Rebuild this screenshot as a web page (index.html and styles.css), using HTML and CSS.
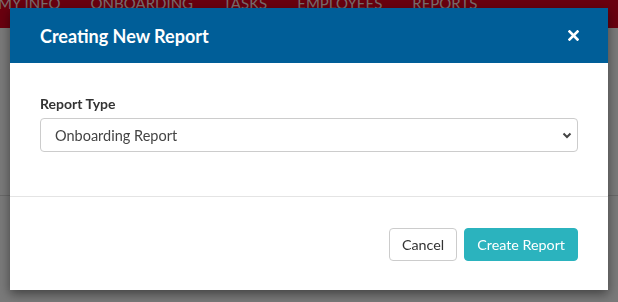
FILE: index.html
```html
<!DOCTYPE html>
<html lang="en">
<head>
    <meta charset="UTF-8">
    <title>Creating New Report</title>
    <link rel="stylesheet" href="styles.css">
</head>
<body>
    <nav class="top-nav">
        <a href="#">My Info</a>
        <a href="#">Onboarding</a>
        <a href="#">Tasks</a>
        <a href="#">Employees</a>
        <a href="#">Reports</a>
    </nav>
    <div class="page-rule"></div>

    <div class="backdrop"></div>

    <div class="modal">
        <div class="modal-header">
            <h2 class="modal-title">Creating New Report</h2>
            <button class="modal-close" aria-label="Close">
                <svg width="11" height="11" viewBox="0 0 11 11">
                    <path d="M1.5 1.5 L9.5 9.5 M9.5 1.5 L1.5 9.5" stroke="#fff" stroke-width="2.6" stroke-linecap="square"/>
                </svg>
            </button>
        </div>
        <div class="modal-body">
            <label class="field-label" for="reportType">Report Type</label>
            <div class="select-wrap">
                <select id="reportType" class="field-select">
                    <option>Onboarding Report</option>
                    <option>Employee Report</option>
                    <option>Task Report</option>
                </select>
                <svg class="select-caret" width="10" height="7" viewBox="0 0 10 7">
                    <path d="M1.5 1.5 L5 5 L8.5 1.5" fill="none" stroke="#444" stroke-width="2"/>
                </svg>
            </div>
        </div>
        <div class="modal-footer">
            <button class="btn btn-default">Cancel</button>
            <button class="btn btn-info">Create Report</button>
        </div>
    </div>
</body>
</html>
```

FILE: styles.css
```css
body {
    margin: 0;
    font-family: Lato, "Open Sans", sans-serif;
    background: #f2f2f2;
    height: 302px;
    overflow: hidden;
}

.top-nav {
    height: 28px;
    background: #d2001e;
    display: flex;
    gap: 30px;
    padding-left: 0;
    margin-left: -2px;
    overflow: hidden;
}

.top-nav a {
    flex-shrink: 0;
    color: #f0d8db;
    text-decoration: none;
    text-transform: uppercase;
    font-size: 15px;
    line-height: 1;
    margin-top: -4px;
}

.page-rule {
    margin-top: 167px;
    height: 1px;
    background: #d0d0d0;
}

.backdrop {
    position: fixed;
    inset: 0;
    background: rgba(0, 0, 0, 0.5);
}

.modal {
    position: fixed;
    top: 8px;
    left: 10px;
    width: 598px;
    background: #fff;
    box-shadow: 0 4px 10px rgba(0, 0, 0, 0.45);
}

.modal-header {
    height: 55px;
    background: #005e98;
    display: flex;
    align-items: center;
    justify-content: space-between;
    padding: 0 30px;
}

.modal-title {
    margin: 0;
    color: #fff;
    font-size: 18px;
    font-weight: 700;
}

.modal-close {
    background: none;
    border: 0;
    padding: 0;
    margin-right: -1px;
    display: flex;
    cursor: pointer;
}

.modal-body {
    padding: 32px 30px 44px;
    border-bottom: 1px solid #e4e4e4;
}

.field-label {
    display: block;
    font-size: 14px;
    font-weight: 700;
    color: #333;
    line-height: 18px;
    margin-bottom: 5px;
}

.select-wrap {
    position: relative;
}

.field-select {
    display: block;
    width: 100%;
    height: 34px;
    padding: 0 14px;
    border: 1px solid #ccc;
    border-radius: 4px;
    background: #fff;
    font-family: inherit;
    font-size: 14.5px;
    color: #444;
    appearance: none;
}

.select-caret {
    position: absolute;
    right: 6px;
    top: 14px;
}

.modal-footer {
    display: flex;
    justify-content: flex-end;
    gap: 7px;
    padding: 31px 30px 29px;
}

.btn {
    height: 33px;
    padding: 0 12px;
    border-radius: 4px;
    font-family: inherit;
    font-size: 14.3px;
    cursor: pointer;
}

.btn-default {
    background: #fff;
    border: 1px solid #ccc;
    color: #333;
}

.btn-info {
    background: #2bb3be;
    border: 1px solid #2bb3be;
    color: #fff;
}
```
